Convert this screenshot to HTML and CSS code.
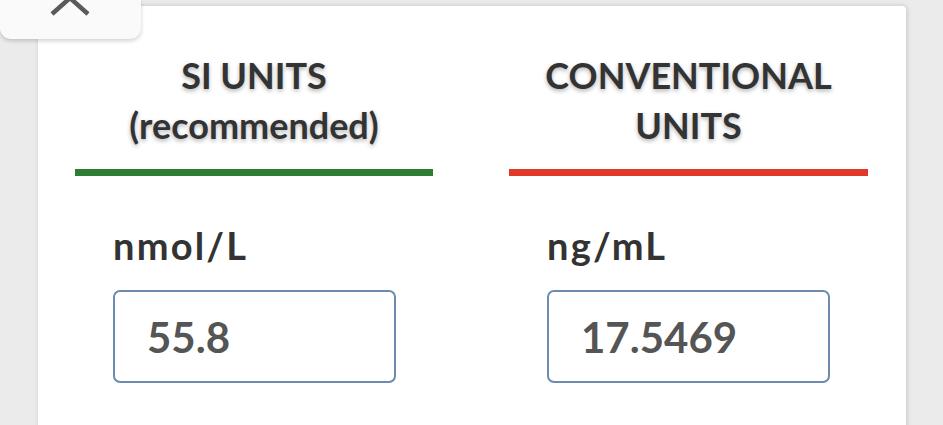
FILE: index.html
```html
<!DOCTYPE html>
<html>
<head>
<meta charset="utf-8">
<link rel="stylesheet" href="styles.css">
</head>
<body>
<div class="tab">
  <svg class="chevron" width="44" height="24" viewBox="0 0 44 24"><polyline points="4,20 22,4 40,20" fill="none" stroke="#5a5a5a" stroke-width="4.5"/></svg>
</div>
<div class="card">
  <div class="cols">
    <div class="col">
      <h2 class="head">SI UNITS<br>(recommended)</h2>
      <div class="bar bar-green"></div>
      <div class="unit">nmol/L</div>
      <div class="field">55.8</div>
    </div>
    <div class="col">
      <h2 class="head">CONVENTIONAL<br>UNITS</h2>
      <div class="bar bar-red"></div>
      <div class="unit">ng/mL</div>
      <div class="field">17.5469</div>
    </div>
  </div>
</div>
</body>
</html>
```
FILE: styles.css
```css
html, body {
  margin: 0;
  padding: 0;
}
body {
  width: 943px;
  height: 425px;
  overflow: hidden;
  background: #ebebeb;
  font-family: Lato, "Open Sans", sans-serif;
  position: relative;
}
.tab {
  position: absolute;
  left: 0;
  top: 0;
  width: 141px;
  height: 39px;
  background: #fafafa;
  border-radius: 0 0 11px 11px;
  box-shadow: 0 2px 4px rgba(0,0,0,0.18);
  z-index: 2;
  overflow: hidden;
}
.chevron {
  position: absolute;
  left: 48px;
  top: -6px;
}
.card {
  margin: 6px 0 0 38px;
  width: 868px;
  height: 440px;
  background: #fff;
  border-radius: 0 4px 0 0;
  box-shadow: 1px 0 5px rgba(0,0,0,0.16);
  padding-top: 44px;
  box-sizing: border-box;
}
.cols {
  display: grid;
  grid-template-columns: 358px 359px;
  column-gap: 76px;
  padding: 0 37px;
}
.col {
  display: flex;
  flex-direction: column;
}
.head {
  margin: 0;
  font-size: 36px;
  line-height: 50px;
  font-weight: 700;
  color: #333;
  text-align: center;
  text-shadow: 0 2px 4px rgba(0,0,0,0.3);
}
.bar {
  height: 7px;
  margin-top: 19px;
}
.bar-green { background: #2f7d32; }
.bar-red { background: #e0392b; }
.unit {
  margin: 49px 0 0 38px;
  font-size: 38px;
  line-height: 41px;
  letter-spacing: 2.2px;
  font-weight: 700;
  color: #333;
}
.field {
  margin: 24px 0 0 38px;
  width: 283px;
  height: 93px;
  box-sizing: border-box;
  border: 2px solid #6b8cae;
  border-radius: 7px;
  display: flex;
  align-items: center;
  padding-left: 32px;
  font-size: 42px;
  font-weight: 700;
  color: #555;
}
```
